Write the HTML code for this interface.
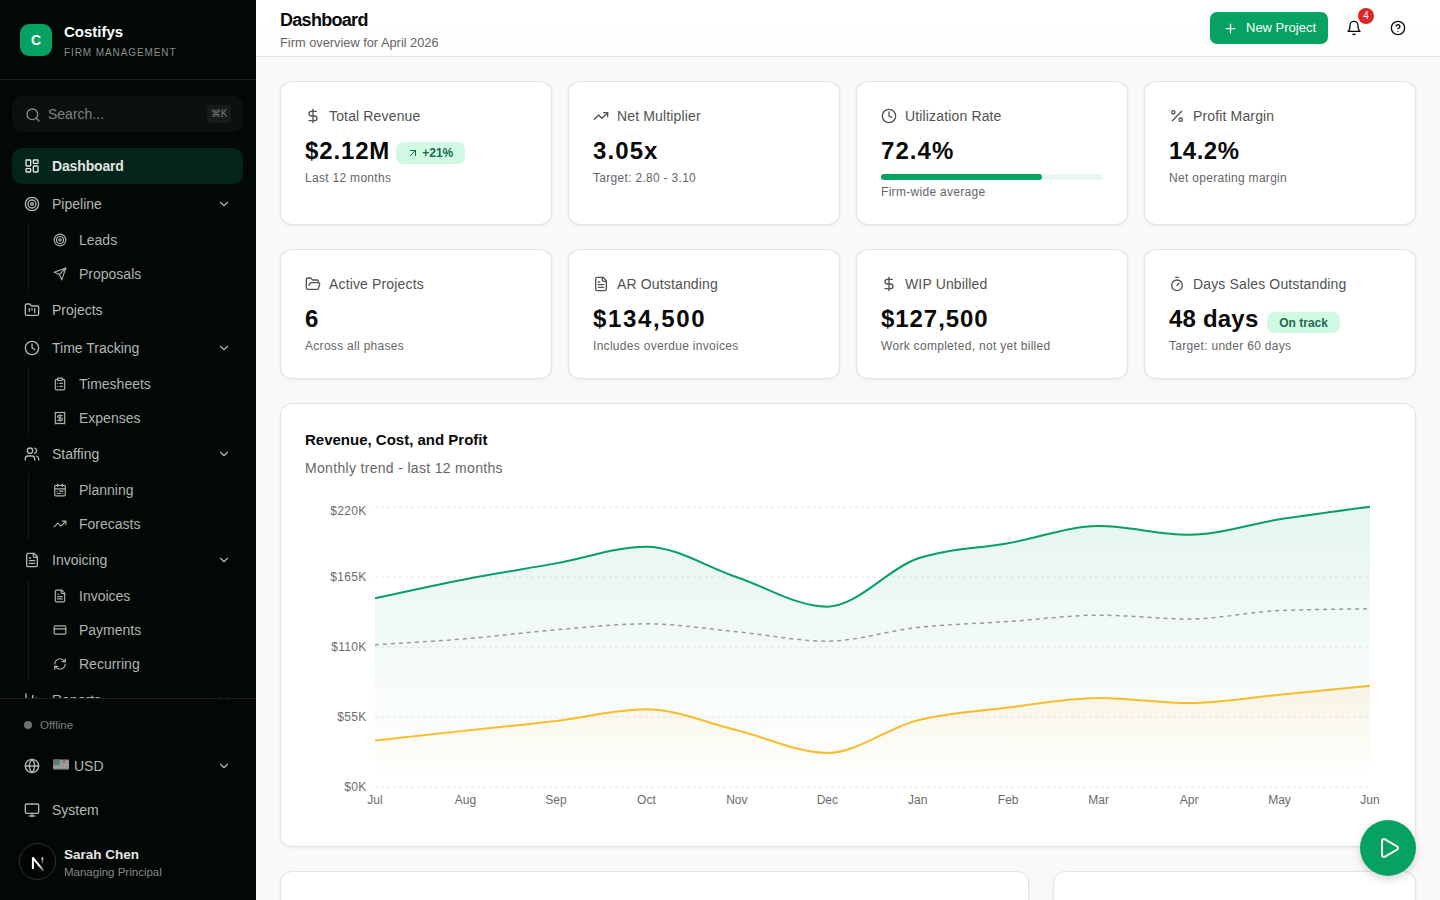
<!DOCTYPE html>
<html>
<head>
<meta charset="utf-8">
<style>
*{box-sizing:border-box;margin:0;padding:0}
html,body{width:1440px;height:900px;overflow:hidden}
body{font-family:"Liberation Sans",sans-serif;background:#faf9f7;color:#0a0a0a;position:relative}
svg.i{fill:none;stroke:currentColor;stroke-width:2;stroke-linecap:round;stroke-linejoin:round;display:block}
/* sidebar */
.sb{position:absolute;left:0;top:0;width:256px;height:900px;background:#020805;color:#b3b5b4;overflow:hidden}
.brand{position:absolute;left:0;top:0;width:256px;height:80px;border-bottom:1px solid #1b211e}
.logo{position:absolute;left:20px;top:24px;width:32px;height:32px;border-radius:9px;background:#06a262;color:#fff;font-weight:700;font-size:14px;line-height:32px;text-align:center}
.bname{position:absolute;left:64px;top:22px;font-size:15px;font-weight:700;color:#fff;line-height:20px}
.bsub{position:absolute;left:64px;top:46.5px;font-size:10px;letter-spacing:0.9px;color:#8a8d8b;line-height:12px}
.search{position:absolute;left:12px;top:96px;width:231px;height:36px;border-radius:10px;background:#0b110e}
.search svg{position:absolute;left:13px;top:11px}
.search .ph{position:absolute;left:36px;top:9px;font-size:14px;color:#7d807e;line-height:18px}
.kbd{position:absolute;left:195px;top:9px;width:24px;height:18px;border-radius:4px;background:#161c19;color:#7a7d7b;font-size:10px;line-height:18px;text-align:center}
.nav{position:absolute;left:12px;top:148px;width:231px;height:550px;overflow:hidden;display:flex;flex-direction:column;gap:2px}
.it{position:relative;height:36px;flex:none;border-radius:10px;font-size:14px;line-height:36px;padding-left:40px;color:#b5b7b6}
.it svg.ic{position:absolute;left:12px;top:10px}
.it svg.ch{position:absolute;left:205px;top:11px}
.it.act{background:#03241a;color:#e2e4e3;font-weight:700;letter-spacing:-0.15px}
.sub{position:relative;height:32px;flex:none;font-size:14px;line-height:32px;padding-left:67px;color:#b0b2b1}
.sub svg{position:absolute;left:41px;top:9px}
.vl{position:absolute;left:16px;width:1px;background:#161b18}
.bottom{position:absolute;left:0;top:698px;width:256px;height:202px;border-top:1px solid #1b211e}
.off{position:absolute;left:24px;top:19px;font-size:11.5px;color:#7e807f;line-height:14px;padding-left:16px}
.off:before{content:"";position:absolute;left:0;top:3px;width:8px;height:8px;border-radius:50%;background:#6e706f}
.brow{position:absolute;left:12px;width:231px;height:36px;font-size:14px;line-height:36px;color:#b5b7b6;padding-left:40px}
.brow svg.ic{position:absolute;left:12px;top:10px}
.user{position:absolute;left:20px;top:145px}
.av{position:absolute;left:-1px;top:-1px;width:37px;height:37px;border-radius:50%;border:1.5px solid #2f3331;background:#020403;color:#fff;font-size:17px;line-height:34px;text-align:center}
.uname{position:absolute;left:44px;top:3px;font-size:13.5px;font-weight:700;color:#e6e7e6;white-space:nowrap;line-height:16px}
.urole{position:absolute;left:44px;top:21.2px;font-size:11.5px;color:#858886;white-space:nowrap;line-height:14px}
/* header */
.hd{position:absolute;left:256px;top:0;width:1184px;height:57px;background:linear-gradient(#fff 0,#fff 17px,#fdfdfc 56px);border-bottom:1px solid #e5e5e3}
.ht{position:absolute;left:24px;top:9px;font-size:18px;font-weight:700;line-height:22px;color:#0a0a0a;letter-spacing:-0.7px}
.hs{position:absolute;left:24px;top:34.5px;font-size:12.8px;line-height:16px;color:#666}
.np{position:absolute;left:954px;top:12px;width:118px;height:32px;border-radius:7px;background:#06a262;color:#fff;font-size:13px;line-height:32px;padding-left:36px}
.np svg{position:absolute;left:13px;top:9px}
.bell{position:absolute;left:1090px;top:20px}
.badge{position:absolute;left:1102px;top:8px;width:16px;height:16px;border-radius:50%;background:#dc2626;color:#fff;font-size:10px;line-height:16px;text-align:center}
.help{position:absolute;left:1134px;top:20px}
/* main */
.card{position:absolute;background:#fff;border:1px solid #e3e3e1;border-radius:12px;box-shadow:0 1px 3px rgba(0,0,0,0.07)}
.kpi .lb{position:absolute;left:24px;top:23px;font-size:14px;line-height:22px;color:#525252;padding-left:24px;white-space:nowrap;letter-spacing:0.15px}
.kpi .lb svg{position:absolute;left:0;top:3px}
.kpi .val{position:absolute;left:24px;top:54px;font-size:24px;font-weight:700;line-height:30px;color:#0a0a0a;white-space:nowrap;letter-spacing:0.6px}
.kpi .sm{position:absolute;left:24px;font-size:12px;line-height:16px;color:#666;white-space:nowrap;letter-spacing:0.3px}
.pill{display:inline-block;vertical-align:top;margin-left:6px;margin-top:5.8px;height:22px;border-radius:7px;background:#d1fae5;color:#166a4b;font-size:12px;line-height:22px;font-weight:700;padding:0 12px 0 26px;position:relative;letter-spacing:0}
.pill svg{position:absolute;left:11px;top:5px}
.pill2{display:inline-block;vertical-align:top;margin-left:8.6px;margin-top:7.9px;height:21.5px;border-radius:7px;background:#d1fae5;color:#1f6b50;font-size:12px;line-height:22px;font-weight:700;padding:0 12.2px;letter-spacing:0}
.prog{position:absolute;left:24px;top:92.2px;width:222px;height:6px;border-radius:3px;background:#eaf6f0}
.prog div{width:72.4%;height:6px;border-radius:3px;background:#06a262}
.ctitle{position:absolute;left:24px;top:27.3px;font-size:15px;font-weight:700;line-height:18px;color:#0a0a0a}
.csub{position:absolute;left:24px;top:55px;font-size:14px;line-height:18px;color:#666;letter-spacing:0.32px}
.fab{position:absolute;left:1360px;top:820px;width:56px;height:56px;border-radius:50%;background:#06a262;box-shadow:0 4px 10px rgba(0,0,0,0.15)}
.fab svg{position:absolute;left:17.4px;top:16px}
</style>
</head>
<body>
<aside class="sb">
  <div class="brand">
    <div class="logo">C</div>
    <div class="bname">Costifys</div>
    <div class="bsub">FIRM MANAGEMENT</div>
  </div>
  <div class="search">
    <svg class="i" width="16" height="16" viewBox="0 0 24 24" style="color:#8a8d8b"><circle cx="11" cy="11" r="8"/><path d="m21 21-4.3-4.3"/></svg>
    <div class="ph">Search...</div>
    <div class="kbd">⌘K</div>
  </div>
  <div class="nav">
    <div class="it act"><svg class="ic i" width="16" height="16" viewBox="0 0 24 24" style="stroke-width:2"><rect width="7" height="9" x="3" y="3" rx="1"/><rect width="7" height="5" x="14" y="3" rx="1"/><rect width="7" height="9" x="14" y="12" rx="1"/><rect width="7" height="5" x="3" y="16" rx="1"/></svg>Dashboard</div>
<div class="it"><svg class="ic i" width="16" height="16" viewBox="0 0 24 24" style="stroke-width:2"><circle cx="12" cy="12" r="10"/><circle cx="12" cy="12" r="6"/><circle cx="12" cy="12" r="2"/></svg>Pipeline<svg class="ch i" width="14" height="14" viewBox="0 0 24 24" style="stroke-width:2"><path d="m6 9 6 6 6-6"/></svg></div>
<div class="sub"><svg class=" i" width="14" height="14" viewBox="0 0 24 24" style="stroke-width:2"><circle cx="12" cy="12" r="10"/><circle cx="12" cy="12" r="6"/><circle cx="12" cy="12" r="2"/></svg>Leads</div>
<div class="sub"><svg class=" i" width="14" height="14" viewBox="0 0 24 24" style="stroke-width:2"><path d="m22 2-7 20-4-9-9-4Z"/><path d="M22 2 11 13"/></svg>Proposals</div>
<div class="it"><svg class="ic i" width="16" height="16" viewBox="0 0 24 24" style="stroke-width:2"><path d="M4 20h16a2 2 0 0 0 2-2V8a2 2 0 0 0-2-2h-7.93a2 2 0 0 1-1.66-.9l-.82-1.2A2 2 0 0 0 7.93 3H4a2 2 0 0 0-2 2v13c0 1.1.9 2 2 2Z"/><path d="M8 10v4"/><path d="M12 10v2"/><path d="M16 10v6"/></svg>Projects</div>
<div class="it"><svg class="ic i" width="16" height="16" viewBox="0 0 24 24" style="stroke-width:2"><circle cx="12" cy="12" r="10"/><polyline points="12 6 12 12 16 14"/></svg>Time Tracking<svg class="ch i" width="14" height="14" viewBox="0 0 24 24" style="stroke-width:2"><path d="m6 9 6 6 6-6"/></svg></div>
<div class="sub"><svg class=" i" width="14" height="14" viewBox="0 0 24 24" style="stroke-width:2"><rect width="8" height="4" x="8" y="2" rx="1" ry="1"/><path d="M16 4h2a2 2 0 0 1 2 2v14a2 2 0 0 1-2 2H6a2 2 0 0 1-2-2V6a2 2 0 0 1 2-2h2"/><path d="M12 11h4"/><path d="M12 16h4"/><path d="M8 11h.01"/><path d="M8 16h.01"/></svg>Timesheets</div>
<div class="sub"><svg class=" i" width="14" height="14" viewBox="0 0 24 24" style="stroke-width:2"><path d="M4 2v20l2-1 2 1 2-1 2 1 2-1 2 1 2-1 2 1V2l-2 1-2-1-2 1-2-1-2 1-2-1-2 1Z"/><path d="M16 8h-6a2 2 0 1 0 0 4h4a2 2 0 1 1 0 4H8"/><path d="M12 17.5v-11"/></svg>Expenses</div>
<div class="it"><svg class="ic i" width="16" height="16" viewBox="0 0 24 24" style="stroke-width:2"><path d="M16 21v-2a4 4 0 0 0-4-4H6a4 4 0 0 0-4 4v2"/><circle cx="9" cy="7" r="4"/><path d="M22 21v-2a4 4 0 0 0-3-3.87"/><path d="M16 3.13a4 4 0 0 1 0 7.75"/></svg>Staffing<svg class="ch i" width="14" height="14" viewBox="0 0 24 24" style="stroke-width:2"><path d="m6 9 6 6 6-6"/></svg></div>
<div class="sub"><svg class=" i" width="14" height="14" viewBox="0 0 24 24" style="stroke-width:2"><rect width="18" height="18" x="3" y="4" rx="2"/><path d="M16 2v4"/><path d="M3 10h18"/><path d="M8 2v4"/><path d="M17 14h-6"/><path d="M13 18H7"/><path d="M7 14h.01"/><path d="M17 18h.01"/></svg>Planning</div>
<div class="sub"><svg class=" i" width="14" height="14" viewBox="0 0 24 24" style="stroke-width:2"><polyline points="22 7 13.5 15.5 8.5 10.5 2 17"/><polyline points="16 7 22 7 22 13"/></svg>Forecasts</div>
<div class="it"><svg class="ic i" width="16" height="16" viewBox="0 0 24 24" style="stroke-width:2"><path d="M15 2H6a2 2 0 0 0-2 2v16a2 2 0 0 0 2 2h12a2 2 0 0 0 2-2V7Z"/><path d="M14 2v4a2 2 0 0 0 2 2h4"/><path d="M10 9H8"/><path d="M16 13H8"/><path d="M16 17H8"/></svg>Invoicing<svg class="ch i" width="14" height="14" viewBox="0 0 24 24" style="stroke-width:2"><path d="m6 9 6 6 6-6"/></svg></div>
<div class="sub"><svg class=" i" width="14" height="14" viewBox="0 0 24 24" style="stroke-width:2"><path d="M15 2H6a2 2 0 0 0-2 2v16a2 2 0 0 0 2 2h12a2 2 0 0 0 2-2V7Z"/><path d="M14 2v4a2 2 0 0 0 2 2h4"/><path d="M10 9H8"/><path d="M16 13H8"/><path d="M16 17H8"/></svg>Invoices</div>
<div class="sub"><svg class=" i" width="14" height="14" viewBox="0 0 24 24" style="stroke-width:2"><rect width="20" height="14" x="2" y="5" rx="2"/><line x1="2" x2="22" y1="10" y2="10"/></svg>Payments</div>
<div class="sub"><svg class=" i" width="14" height="14" viewBox="0 0 24 24" style="stroke-width:2"><path d="M3 12a9 9 0 0 1 9-9 9.75 9.75 0 0 1 6.74 2.74L21 8"/><path d="M21 3v5h-5"/><path d="M21 12a9 9 0 0 1-9 9 9.75 9.75 0 0 1-6.74-2.74L3 16"/><path d="M8 16H3v5"/></svg>Recurring</div>
<div class="it"><svg class="ic i" width="16" height="16" viewBox="0 0 24 24" style="stroke-width:2"><path d="M3 3v18h18"/><path d="M18 17V9"/><path d="M13 17V5"/><path d="M8 17v-3"/></svg>Reports<svg class="ch i" width="14" height="14" viewBox="0 0 24 24" style="stroke-width:2"><path d="m6 9 6 6 6-6"/></svg></div><div class="vl" style="top:76px;height:66px"></div><div class="vl" style="top:220px;height:66px"></div><div class="vl" style="top:326px;height:66px"></div><div class="vl" style="top:432px;height:100px"></div>
  </div>
  <div class="bottom">
    <div class="off">Offline</div>
    <div class="brow" style="top:49px"><svg class="ic i" width="16" height="16" viewBox="0 0 24 24" style="stroke-width:2"><circle cx="12" cy="12" r="10"/><path d="M12 2a14.5 14.5 0 0 0 0 20 14.5 14.5 0 0 0 0-20"/><path d="M2 12h20"/></svg><svg width="16" height="11" viewBox="0 0 16 11" style="position:absolute;left:41px;top:11px"><rect x="0" y="0.5" width="16" height="10" rx="1" fill="#8d8f8e"/><path d="M0 3h16M0 5.5h16M0 8h16" stroke="#a9abaa" stroke-width="1"/><rect x="0" y="0.5" width="7" height="5.5" fill="#6f7170"/><path d="M2 5.5h4V2.2" stroke="#2fa58a" stroke-width="1.6" fill="none"/><circle cx="11" cy="2.5" r="1" fill="#e12d2d"/></svg><span style="padding-left:22px">USD</span><svg class="ch i" style="position:absolute;left:205px;top:11px" width="14" height="14" viewBox="0 0 24 24" style="stroke-width:2"><path d="m6 9 6 6 6-6"/></svg></div>
<div class="brow" style="top:93px"><svg class="ic i" width="16" height="16" viewBox="0 0 24 24" style="stroke-width:2"><rect width="20" height="14" x="2" y="3" rx="2"/><line x1="8" x2="16" y1="21" y2="21"/><line x1="12" x2="12" y1="17" y2="21"/></svg>System</div>
<div class="user"><div class="av"><svg width="36" height="36" viewBox="0 0 36 36" style="position:absolute;left:-1px;top:0.5px"><defs><linearGradient id="nr" x1="0" y1="0" x2="0" y2="1"><stop offset="0" stop-color="#fff"/><stop offset="1" stop-color="#fff" stop-opacity="0"/></linearGradient><linearGradient id="nd" x1="0" y1="0" x2="1" y2="1"><stop offset="0.6" stop-color="#fff"/><stop offset="1" stop-color="#fff" stop-opacity="0.3"/></linearGradient></defs><rect x="12.9" y="12.4" width="2" height="11.6" fill="#fff"/><path d="M13.6 12.4 L24.6 25.8" stroke="url(#nd)" stroke-width="2"/><rect x="22.6" y="12.4" width="1.6" height="7" fill="url(#nr)"/></svg></div><div class="uname">Sarah Chen</div><div class="urole">Managing Principal</div></div>
  </div>
</aside>
<header class="hd">
  <div class="ht">Dashboard</div>
  <div class="hs">Firm overview for April 2026</div>
  <div class="np"><svg class="i" width="15" height="15" viewBox="0 0 24 24"><path d="M5 12h14"/><path d="M12 5v14"/></svg>New Project</div>
  <svg class="i bell" width="16" height="16" viewBox="0 0 24 24" style="color:#0a0a0a"><path d="M6 8a6 6 0 0 1 12 0c0 7 3 9 3 9H3s3-2 3-9"/><path d="M10.3 21a1.94 1.94 0 0 0 3.4 0"/></svg>
  <div class="badge">4</div>
  <svg class="i help" width="16" height="16" viewBox="0 0 24 24" style="color:#0a0a0a"><circle cx="12" cy="12" r="10"/><path d="M9.09 9a3 3 0 0 1 5.83 1c0 2-3 3-3 3"/><path d="M12 17h.01"/></svg>
</header>
<div class="card kpi" style="left:280px;top:81px;width:272px;height:144px"><div class="lb"><svg class=" i" width="16" height="16" viewBox="0 0 24 24" style="stroke-width:2"><line x1="12" x2="12" y1="2" y2="22"/><path d="M17 5H9.5a3.5 3.5 0 0 0 0 7h5a3.5 3.5 0 0 1 0 7H6"/></svg>Total Revenue</div><div class="val"><span style="letter-spacing:0.86px">$2.12M</span><span class="pill"><svg class=" i" width="12" height="12" viewBox="0 0 24 24" style="stroke-width:2"><path d="M7 7h10v10"/><path d="M7 17 17 7"/></svg>+21%</span></div><div class="sm" style="top:88px">Last 12 months</div></div>
<div class="card kpi" style="left:568px;top:81px;width:272px;height:144px"><div class="lb"><svg class=" i" width="16" height="16" viewBox="0 0 24 24" style="stroke-width:2"><polyline points="22 7 13.5 15.5 8.5 10.5 2 17"/><polyline points="16 7 22 7 22 13"/></svg>Net Multiplier</div><div class="val"><span style="letter-spacing:1.1px">3.05x</span></div><div class="sm" style="top:88px">Target: 2.80 - 3.10</div></div>
<div class="card kpi" style="left:856px;top:81px;width:272px;height:144px"><div class="lb"><svg class=" i" width="16" height="16" viewBox="0 0 24 24" style="stroke-width:2"><circle cx="12" cy="12" r="10"/><polyline points="12 6 12 12 16 14"/></svg>Utilization Rate</div><div class="val"><span style="letter-spacing:1.07px">72.4%</span></div><div class="prog"><div></div></div><div class="sm" style="top:102.3px">Firm-wide average</div></div>
<div class="card kpi" style="left:1144px;top:81px;width:272px;height:144px"><div class="lb"><svg class=" i" width="16" height="16" viewBox="0 0 24 24" style="stroke-width:2"><line x1="19" x2="5" y1="5" y2="19"/><circle cx="6.5" cy="6.5" r="2.5"/><circle cx="17.5" cy="17.5" r="2.5"/></svg>Profit Margin</div><div class="val"><span style="letter-spacing:0.5px">14.2%</span></div><div class="sm" style="top:88px">Net operating margin</div></div>
<div class="card kpi" style="left:280px;top:249px;width:272px;height:130px"><div class="lb"><svg class=" i" width="16" height="16" viewBox="0 0 24 24" style="stroke-width:2"><path d="m6 14 1.5-2.9A2 2 0 0 1 9.24 10H20a2 2 0 0 1 1.94 2.5l-1.54 6a2 2 0 0 1-1.950 1.5H4a2 2 0 0 1-2-2V5a2 2 0 0 1 2-2h3.9a2 2 0 0 1 1.69.9l.81 1.2a2 2 0 0 0 1.67.9H18a2 2 0 0 1 2 2v2"/></svg>Active Projects</div><div class="val"><span style="letter-spacing:0.6px">6</span></div><div class="sm" style="top:88px">Across all phases</div></div>
<div class="card kpi" style="left:568px;top:249px;width:272px;height:130px"><div class="lb"><svg class=" i" width="16" height="16" viewBox="0 0 24 24" style="stroke-width:2"><path d="M15 2H6a2 2 0 0 0-2 2v16a2 2 0 0 0 2 2h12a2 2 0 0 0 2-2V7Z"/><path d="M14 2v4a2 2 0 0 0 2 2h4"/><path d="M10 9H8"/><path d="M16 13H8"/><path d="M16 17H8"/></svg>AR Outstanding</div><div class="val"><span style="letter-spacing:1.66px">$134,500</span></div><div class="sm" style="top:88px">Includes overdue invoices</div></div>
<div class="card kpi" style="left:856px;top:249px;width:272px;height:130px"><div class="lb"><svg class=" i" width="16" height="16" viewBox="0 0 24 24" style="stroke-width:2"><line x1="12" x2="12" y1="2" y2="22"/><path d="M17 5H9.5a3.5 3.5 0 0 0 0 7h5a3.5 3.5 0 0 1 0 7H6"/></svg>WIP Unbilled</div><div class="val"><span style="letter-spacing:0.94px">$127,500</span></div><div class="sm" style="top:88px">Work completed, not yet billed</div></div>
<div class="card kpi" style="left:1144px;top:249px;width:272px;height:130px"><div class="lb"><svg class=" i" width="16" height="16" viewBox="0 0 24 24" style="stroke-width:2"><line x1="10" x2="14" y1="2" y2="2"/><line x1="12" x2="15" y1="14" y2="11"/><circle cx="12" cy="14" r="8"/></svg>Days Sales Outstanding</div><div class="val"><span style="letter-spacing:0.2px">48 days</span><span class="pill2">On track</span></div><div class="sm" style="top:88px">Target: under 60 days</div></div>
<div class="card" style="left:280px;top:403px;width:1136px;height:444px"><div class="ctitle">Revenue, Cost, and Profit</div><div class="csub">Monthly trend - last 12 months</div></div>
<div class="chartwrap" style="position:absolute;left:0;top:0;width:1440px;height:900px;pointer-events:none"><svg width="1440" height="900" style="position:absolute;left:0;top:0" font-family="Liberation Sans" font-size="12" fill="#6b6b6b">
<defs>
<linearGradient id="gr" x1="0" y1="0" x2="0" y2="1"><stop offset="5%" stop-color="#10a36a" stop-opacity="0.10"/><stop offset="95%" stop-color="#10a36a" stop-opacity="0"/></linearGradient>
<linearGradient id="gp" x1="0" y1="0" x2="0" y2="1"><stop offset="5%" stop-color="#f5b82e" stop-opacity="0.10"/><stop offset="95%" stop-color="#f5b82e" stop-opacity="0"/></linearGradient>
</defs>
<line x1="375" x2="1370" y1="507" y2="507" stroke="#e5e5e5" stroke-dasharray="3 3"/><text x="366.5" y="514.8" text-anchor="end" letter-spacing="0.3">$220K</text><line x1="375" x2="1370" y1="577" y2="577" stroke="#e5e5e5" stroke-dasharray="3 3"/><text x="366.5" y="581.3" text-anchor="end" letter-spacing="0.3">$165K</text><line x1="375" x2="1370" y1="647" y2="647" stroke="#e5e5e5" stroke-dasharray="3 3"/><text x="366.5" y="651.3" text-anchor="end" letter-spacing="0.3">$110K</text><line x1="375" x2="1370" y1="717" y2="717" stroke="#e5e5e5" stroke-dasharray="3 3"/><text x="366.5" y="721.3" text-anchor="end" letter-spacing="0.3">$55K</text><line x1="375" x2="1370" y1="787" y2="787" stroke="#e5e5e5" stroke-dasharray="3 3"/><text x="366.5" y="791.3" text-anchor="end" letter-spacing="0.3">$0K</text><text x="375.0" y="804" text-anchor="middle">Jul</text><text x="465.5" y="804" text-anchor="middle">Aug</text><text x="555.9" y="804" text-anchor="middle">Sep</text><text x="646.4" y="804" text-anchor="middle">Oct</text><text x="736.8" y="804" text-anchor="middle">Nov</text><text x="827.3" y="804" text-anchor="middle">Dec</text><text x="917.7" y="804" text-anchor="middle">Jan</text><text x="1008.2" y="804" text-anchor="middle">Feb</text><text x="1098.6" y="804" text-anchor="middle">Mar</text><text x="1189.1" y="804" text-anchor="middle">Apr</text><text x="1279.5" y="804" text-anchor="middle">May</text><text x="1370.0" y="804" text-anchor="middle">Jun</text>
<path d="M375.00,598.25C405.15,591.62,435.30,584.98,465.45,579.16C495.61,573.35,525.76,568.79,555.91,563.38C586.06,557.97,616.21,546.71,646.36,546.71C676.52,546.71,706.67,567.26,736.82,577.25C766.97,587.25,797.12,606.65,827.27,606.65C857.42,606.65,887.58,568.73,917.73,558.55C947.88,548.36,978.03,548.68,1008.18,543.27C1038.33,537.86,1068.48,526.09,1098.64,526.09C1128.79,526.09,1158.94,534.75,1189.09,534.75C1219.24,534.75,1249.39,524.01,1279.55,519.35C1309.70,514.68,1339.85,510.71,1370.00,506.75L1370.00,787L375.00,787Z" fill="url(#gr)" stroke="none"/>
<path d="M375.00,740.42C405.15,737.14,435.30,733.86,465.45,730.62C495.61,727.37,525.76,724.49,555.91,720.95C586.06,717.40,616.21,709.36,646.36,709.36C676.52,709.36,706.67,722.98,736.82,730.24C766.97,737.49,797.12,752.89,827.27,752.89C857.42,752.89,887.58,727.75,917.73,720.18C947.88,712.61,978.03,711.17,1008.18,707.45C1038.33,703.74,1068.48,697.91,1098.64,697.91C1128.79,697.91,1158.94,703.00,1189.09,703.00C1219.24,703.00,1249.39,697.61,1279.55,694.73C1309.70,691.84,1339.85,688.77,1370.00,685.69L1370.00,787L375.00,787Z" fill="url(#gp)" stroke="none"/>
<path d="M375.00,598.25C405.15,591.62,435.30,584.98,465.45,579.16C495.61,573.35,525.76,568.79,555.91,563.38C586.06,557.97,616.21,546.71,646.36,546.71C676.52,546.71,706.67,567.26,736.82,577.25C766.97,587.25,797.12,606.65,827.27,606.65C857.42,606.65,887.58,568.73,917.73,558.55C947.88,548.36,978.03,548.68,1008.18,543.27C1038.33,537.86,1068.48,526.09,1098.64,526.09C1128.79,526.09,1158.94,534.75,1189.09,534.75C1219.24,534.75,1249.39,524.01,1279.55,519.35C1309.70,514.68,1339.85,510.71,1370.00,506.75" fill="none" stroke="#07a063" stroke-width="2"/>
<path d="M375.00,644.71C405.15,642.96,435.30,641.21,465.45,638.73C495.61,636.25,525.76,632.30,555.91,629.82C586.06,627.34,616.21,623.84,646.36,623.84C676.52,623.84,706.67,628.84,736.82,631.73C766.97,634.61,797.12,641.15,827.27,641.15C857.42,641.15,887.58,630.67,917.73,627.40C947.88,624.13,978.03,623.58,1008.18,621.55C1038.33,619.51,1068.48,615.18,1098.64,615.18C1128.79,615.18,1158.94,619.00,1189.09,619.00C1219.24,619.00,1249.39,611.79,1279.55,610.60C1309.70,609.41,1339.85,609.12,1370.00,608.82" fill="none" stroke="#9a9a9a" stroke-width="1.5" stroke-dasharray="4 4"/>
<path d="M375.00,740.42C405.15,737.14,435.30,733.86,465.45,730.62C495.61,727.37,525.76,724.49,555.91,720.95C586.06,717.40,616.21,709.36,646.36,709.36C676.52,709.36,706.67,722.98,736.82,730.24C766.97,737.49,797.12,752.89,827.27,752.89C857.42,752.89,887.58,727.75,917.73,720.18C947.88,712.61,978.03,711.17,1008.18,707.45C1038.33,703.74,1068.48,697.91,1098.64,697.91C1128.79,697.91,1158.94,703.00,1189.09,703.00C1219.24,703.00,1249.39,697.61,1279.55,694.73C1309.70,691.84,1339.85,688.77,1370.00,685.69" fill="none" stroke="#f9bc2c" stroke-width="2"/>
</svg></div>
<div class="card" style="left:280px;top:871px;width:749px;height:100px"></div>
<div class="card" style="left:1053px;top:871px;width:363px;height:100px"></div>
<div class="fab"><svg class="i" width="24" height="24" viewBox="0 0 24 24" style="color:#fff"><path d="M5 5a2 2 0 0 1 3.008-1.728l11.997 6.998a2 2 0 0 1 .003 3.458l-12 7A2 2 0 0 1 5 19z"/></svg></div>
</body>
</html>
